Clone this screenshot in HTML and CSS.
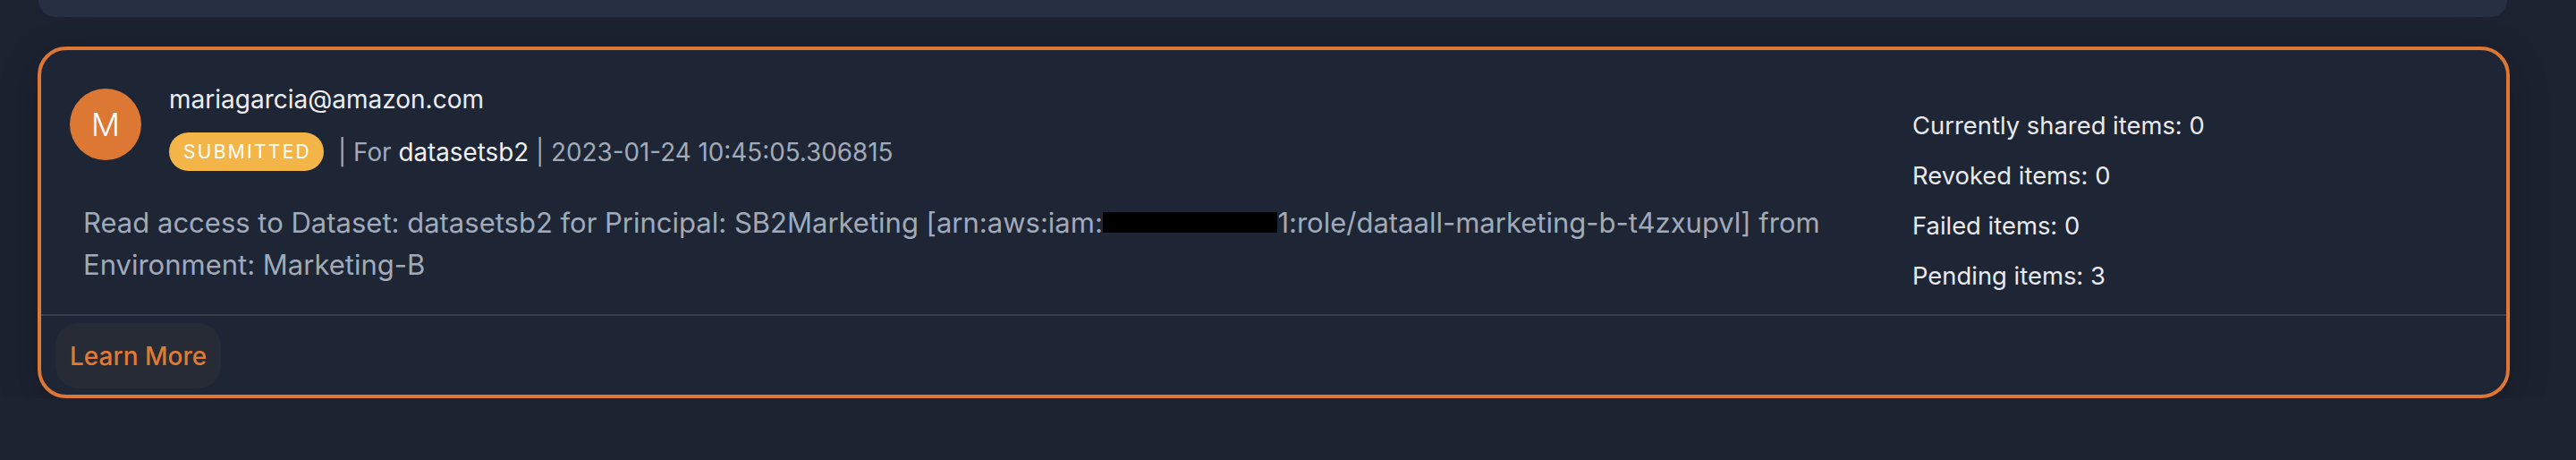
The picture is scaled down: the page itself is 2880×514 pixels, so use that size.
FILE: index.html
```html
<!DOCTYPE html>
<html lang="en">
<head>
<meta charset="utf-8">
<title>Share request</title>
<link rel="stylesheet" href="styles.css">
</head>
<body>
<div class="page">
  <div class="prev-card"></div>
  <div class="share-card">
    <div class="card-body">
      <div class="main">
        <div class="header">
          <div class="avatar">M</div>
          <div class="who">
            <div class="email">mariagarcia@amazon.com</div>
            <div class="status-row">
              <span class="badge">SUBMITTED</span>
              <span class="meta">| For <span class="strong">datasetsb2</span> | 2023-01-24 10:45:05.306815</span>
            </div>
          </div>
        </div>
        <p class="desc">Read access to Dataset: datasetsb2 for Principal: SB2Marketing [arn:aws:iam:<span class="redact">0000000000</span>1:role/dataall-marketing-b-t4zxupvl] from Environment: Marketing-B</p>
      </div>
      <div class="stats">
        <div class="stat">Currently shared items: 0</div>
        <div class="stat">Revoked items: 0</div>
        <div class="stat">Failed items: 0</div>
        <div class="stat">Pending items: 3</div>
      </div>
    </div>
    <div class="divider"></div>
    <div class="actions">
      <button class="learn">Learn More</button>
    </div>
  </div>
</div>
</body>
</html>
```

FILE: styles.css
```css
html, body {
  margin: 0;
  padding: 0;
  background: #1c2230;
  font-family: Inter, "Liberation Sans", sans-serif;
}

.page {
  padding: 0 74px 0 42px;
}

.prev-card {
  height: 19px;
  margin: 0 3px 0 1px;
  background: #272f43;
  border-radius: 0 0 32px 32px;
}

.share-card {
  margin-top: 33px;
  border: 4px solid #dd7733;
  border-radius: 32px;
  background: #1e2535;
  box-shadow: 0 12px 44px rgba(0, 0, 0, 0.22);
}

.card-body {
  display: flex;
}

.main {
  flex: 1;
  padding-bottom: 32px;
}

.header {
  display: flex;
  align-items: flex-start;
  gap: 31px;
  padding: 40px 0 0 32px;
}

.avatar {
  width: 80px;
  height: 80px;
  margin-top: 3px;
  border-radius: 50%;
  background: #dc7834;
  color: #ffffff;
  font-size: 36px;
  font-weight: 300;
  display: flex;
  align-items: center;
  justify-content: center;
}

.email {
  font-size: 28px;
  line-height: 30px;
  color: #eceef2;
}

.status-row {
  display: flex;
  align-items: center;
  margin-top: 22px;
  height: 43px;
}

.badge {
  display: inline-flex;
  align-items: center;
  height: 43px;
  padding: 0 14px 0 16px;
  border-radius: 22px;
  background: #f4b548;
  color: #ffffff;
  font-size: 21px;
  font-weight: 400;
  letter-spacing: 2.3px;
}

.meta {
  margin-left: 16px;
  font-size: 27.8px;
  font-weight: 400;
  color: #a0aab9;
}

.meta .strong {
  color: #eef0f4;
}

.desc {
  margin: 34px 0 0 47px;
  font-size: 31px;
  font-weight: 400;
  line-height: 47px;
  color: #a0aab9;
}

.redact {
  position: relative;
}

.redact::after {
  content: "";
  position: absolute;
  left: 0;
  right: 0;
  top: 7px;
  height: 23px;
  background: #000000;
}

.stats {
  width: 664px;
  padding-top: 56px;
}

.stat {
  font-size: 27.4px;
  line-height: 56px;
  color: #e8eaee;
}

.divider {
  height: 2px;
  background: #363d4c;
}

.actions {
  padding: 8px 16px 7px;
}

.learn {
  height: 73px;
  padding: 0 16px;
  border: none;
  border-radius: 26px;
  background: #262b36;
  color: #e07a35;
  font-family: Inter, "Liberation Sans", sans-serif;
  font-size: 28px;
  font-weight: 500;
}
```
